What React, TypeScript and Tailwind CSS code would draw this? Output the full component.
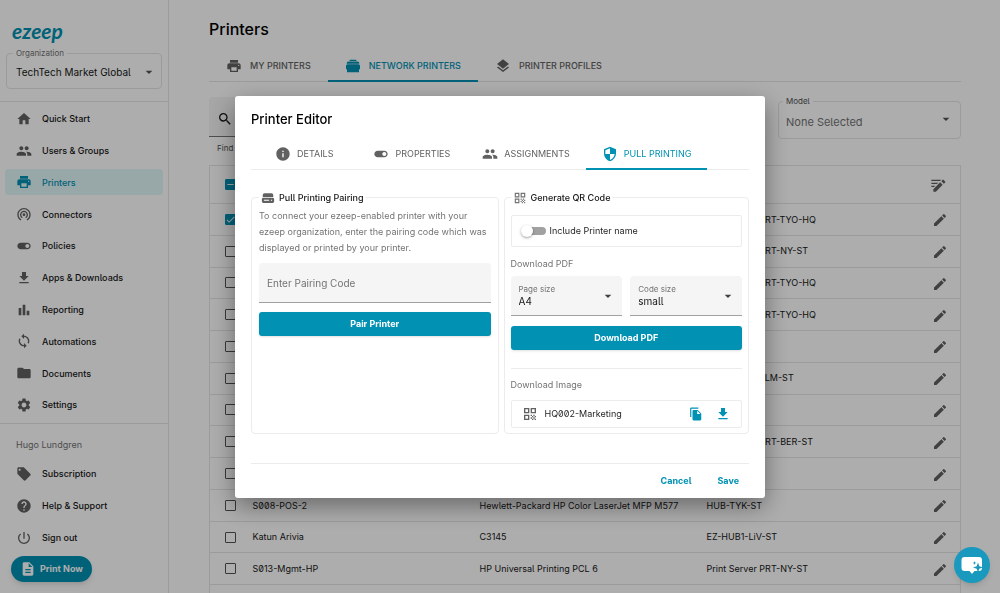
import type { ReactNode } from "react";
import type { IconType } from "react-icons";
import {
  MdArrowDropDown,
  MdBarChart,
  MdCheck,
  MdDescription,
  MdEdit,
  MdFileCopy,
  MdFolder,
  MdGetApp,
  MdHelp,
  MdHome,
  MdInfo,
  MdLayers,
  MdLocalOffer,
  MdPeople,
  MdPowerSettingsNew,
  MdPrint,
  MdQrCode,
  MdRemove,
  MdSearch,
  MdSecurity,
  MdSettings,
  MdSync,
  MdToggleOn,
  MdWifiTethering,
} from "react-icons/md";

interface NavEntry {
  label: string;
  icon: IconType;
  active?: boolean;
}

interface Printer {
  name: string;
  model: string;
  server: string;
  selected?: boolean;
}

const mainNav: NavEntry[] = [
  { label: "Quick Start", icon: MdHome },
  { label: "Users & Groups", icon: MdPeople },
  { label: "Printers", icon: MdPrint, active: true },
  { label: "Connectors", icon: MdWifiTethering },
  { label: "Policies", icon: MdToggleOn },
  { label: "Apps & Downloads", icon: MdGetApp },
  { label: "Reporting", icon: MdBarChart },
  { label: "Automations", icon: MdSync },
  { label: "Documents", icon: MdFolder },
  { label: "Settings", icon: MdSettings },
];

const userNav: NavEntry[] = [
  { label: "Subscription", icon: MdLocalOffer },
  { label: "Help & Support", icon: MdHelp },
  { label: "Sign out", icon: MdPowerSettingsNew },
];

const printers: Printer[] = [
  { name: "", model: "", server: "Print Server PRT-TYO-HQ", selected: true },
  { name: "", model: "", server: "Print Server PRT-NY-ST" },
  { name: "", model: "", server: "Print Server PRT-TYO-HQ" },
  { name: "", model: "", server: "Print Server PRT-TYO-HQ" },
  { name: "", model: "", server: "" },
  { name: "", model: "", server: "Print Server ELM-ST" },
  { name: "", model: "", server: "" },
  { name: "", model: "", server: "Print Server PRT-BER-ST" },
  { name: "", model: "", server: "" },
  { name: "S008-POS-2", model: "Hewlett-Packard HP Color LaserJet MFP M577", server: "HUB-TYK-ST" },
  { name: "Katun Arivia", model: "C3145", server: "EZ-HUB1-LiV-ST" },
  { name: "S013-Mgmt-HP", model: "HP Universal Printing PCL 6", server: "Print Server PRT-NY-ST" },
  { name: "", model: "", server: "" },
];

function NetworkPrinterIcon({ className }: { className?: string }) {
  return (
    <svg viewBox="0 0 24 24" fill="currentColor" className={className} aria-hidden="true">
      <path d="M7 2.500h10v2H7zM5.500 5.200h13a3 3 0 0 1 3 3.300h-19a3 3 0 0 1 3-3.300z" />
      <path d="M4 9.200h16a2.500 2.500 0 0 1 2.500 2.500V17H21v4.500H3V17H1.500v-5.300A2.500 2.500 0 0 1 4 9.200z" />
    </svg>
  );
}

function PairingIcon({ className }: { className?: string }) {
  return (
    <svg viewBox="0 0 24 24" fill="currentColor" className={className} aria-hidden="true">
      <path d="M6 4h12a3 3 0 0 1 3 3v3.500H3V7a3 3 0 0 1 3-3z" />
      <path
        fillRule="evenodd"
        d="M3 12h18a1.500 1.500 0 0 1 1.500 1.500V18a2.500 2.500 0 0 1-2.500 2.500H4A2.500 2.500 0 0 1 1.500 18v-4.500A1.500 1.500 0 0 1 3 12zM5 15.200v1.600h9v-1.600zm12 0v1.600h2v-1.600z"
      />
    </svg>
  );
}

function BulkEditIcon({ className }: { className?: string }) {
  return (
    <svg viewBox="0 0 24 24" fill="currentColor" className={className} aria-hidden="true">
      <path d="M2 4h15l-2 2H2zM2 8.500h10.500l-2 2H2zM2 13h6l-2 2H2z" />
      <path d="M5 18.200V22h3.800L19 11.800 15.200 8zM22.700 8.100a1 1 0 0 0 0-1.400l-2.400-2.400a1 1 0 0 0-1.400 0L17 6.200 20.800 10z" />
    </svg>
  );
}

function ChatIcon() {
  return (
    <svg viewBox="0 0 24 24" className="size-6" aria-hidden="true">
      <path
        fill="white"
        d="M4.500 4h14.500a3 3 0 0 1 3 3v8a3 3 0 0 1-3 3h-4.500L12 21l-2.500-3h-5a3 3 0 0 1-3-3V7a3 3 0 0 1 3-3z"
      />
      <path
        fill="#1899bd"
        d="M18 9.500l1.300 3.700L23 14.500l-3.700 1.300L18 19.500l-1.300-3.700-3.700-1.300 3.700-1.300zM14.500 8l.5 1.500 1.500.5-1.500.5-.5 1.500-.5-1.500-1.500-.5 1.500-.5z"
      />
    </svg>
  );
}

function NavItem({ label, icon: Icon, active }: NavEntry) {
  return (
    <li className="flex items-center">
      <a
        href="#"
        className={`flex h-[26px] w-full items-center gap-[10px] rounded-sm px-[11px] text-[9px] font-medium ${
          active ? "bg-[#e0f6f8] text-[#0091b3]" : "text-neutral-900"
        }`}
      >
        <Icon className={`size-4 ${active ? "" : "text-[#616161]"}`} />
        {label}
      </a>
    </li>
  );
}

function Sidebar() {
  return (
    <aside className="flex w-[169px] shrink-0 flex-col border-r border-neutral-200">
      <div className="border-b border-neutral-200 px-[6px] pt-[14px] pb-3">
        <a href="#" className="block px-[6px] font-['Lato'] text-[21px] leading-[33px] font-bold text-[#0091b3] italic">
          ezeep
        </a>
        <fieldset className="rounded-sm border border-neutral-200 pb-[3px]">
          <legend className="ml-[6px] px-[3px] text-[8px] leading-[12px] text-neutral-500">
            <label htmlFor="organization">Organization</label>
          </legend>
          <div className="relative">
            <select
              id="organization"
              className="block w-full appearance-none px-[9px] text-[10px] leading-[26px] text-neutral-900"
            >
              <option>TechTech Market Global</option>
            </select>
            <MdArrowDropDown className="pointer-events-none absolute top-[5px] right-1 size-4 text-neutral-600" />
          </div>
        </fieldset>
      </div>
      <nav>
        <ul className="grid h-[322px] auto-rows-fr border-b border-neutral-200 px-[5px] pt-px pb-[2px]">
          {mainNav.map((entry) => (
            <NavItem key={entry.label} {...entry} />
          ))}
        </ul>
        <h2 className="px-4 pt-[13px] pb-[5px] text-[9px] leading-4 text-neutral-500">Hugo Lundgren</h2>
        <ul className="grid h-[96px] auto-rows-fr px-[5px]">
          {userNav.map((entry) => (
            <NavItem key={entry.label} {...entry} />
          ))}
        </ul>
      </nav>
      <button className="mt-[2px] ml-[11px] flex h-[26px] w-fit shrink-0 items-center gap-1 rounded-full bg-[#0091b3] px-[9px] text-[9px] font-bold text-white shadow-md">
        <MdDescription className="size-4" />
        Print Now
      </button>
    </aside>
  );
}

function PageTab({ icon, label, active }: { icon: ReactNode; label: string; active?: boolean }) {
  return (
    <button
      role="tab"
      aria-selected={!!active}
      className={`-mb-px flex h-8 items-center gap-2 border-b-2 px-[17px] pt-[2px] text-[9px] font-medium ${
        active ? "border-[#0091b3] text-[#0091b3]" : "border-transparent text-[#616161]"
      }`}
    >
      {icon}
      {label}
    </button>
  );
}

function RowCheckbox({ label, checked, mixed }: { label: string; checked?: boolean; mixed?: boolean }) {
  const filled = checked || mixed;
  return (
    <span className="relative ml-[15px] block size-[11px]">
      <input
        type="checkbox"
        aria-label={label}
        defaultChecked={filled}
        className="block size-[11px] appearance-none rounded-[1px] border border-neutral-600 checked:border-[#0091b3] checked:bg-[#0091b3]"
      />
      {checked && <MdCheck className="pointer-events-none absolute inset-0 size-[11px] text-white" />}
      {mixed && <MdRemove className="pointer-events-none absolute inset-0 size-[11px] text-white" />}
    </span>
  );
}

function PrinterTable() {
  return (
    <table className="mt-[10px] h-[452px] w-full table-fixed border border-neutral-200 text-left text-[9px] text-neutral-900">
      <colgroup>
        <col className="w-[43px]" />
        <col className="w-[227px]" />
        <col className="w-[227px]" />
        <col />
        <col className="w-[31px]" />
      </colgroup>
      <thead>
        <tr className="h-[38px] border-b border-neutral-200">
          <th>
            <RowCheckbox label="Select all printers" mixed />
          </th>
          <th />
          <th />
          <th />
          <th>
            <button aria-label="Edit selected printers" className="block">
              <BulkEditIcon className="size-4 text-[#616161]" />
            </button>
          </th>
        </tr>
      </thead>
      <tbody>
        {printers.map((printer, i) => (
          <tr key={i} className="border-b border-neutral-200">
            <td>
              <RowCheckbox label={`Select printer ${i + 1}`} checked={printer.selected} />
            </td>
            <td className="whitespace-nowrap">{printer.name}</td>
            <td className="whitespace-nowrap">{printer.model}</td>
            <td className="whitespace-nowrap">{printer.server}</td>
            <td>
              <button aria-label={`Edit printer ${i + 1}`} className="block pt-[2px] pl-[2px]">
                <MdEdit className="size-4 text-[#616161]" />
              </button>
            </td>
          </tr>
        ))}
      </tbody>
    </table>
  );
}

function PrintersPage() {
  return (
    <main className="min-w-0 flex-1 pr-[39px] pl-10">
      <h1 className="pt-[17px] text-[16px] leading-6 font-medium text-black">Printers</h1>
      <div role="tablist" className="mt-[9px] flex border-b border-neutral-200">
        <PageTab icon={<MdPrint className="size-4" />} label="MY PRINTERS" />
        <PageTab icon={<NetworkPrinterIcon className="size-4" />} label="NETWORK PRINTERS" active />
        <PageTab icon={<MdLayers className="size-4" />} label="PRINTER PROFILES" />
      </div>
      <div className="mt-[15px] flex justify-between">
        <div className="w-[270px]">
          <div className="flex h-10 items-center rounded-t-sm border-b border-neutral-500 bg-neutral-100 px-2 pt-1">
            <MdSearch className="size-4 text-neutral-900" />
            <input id="search" aria-label="Search" className="min-w-0 flex-1" />
          </div>
          <p className="px-2 pt-1 text-[8px] leading-[14px] text-neutral-600">Find</p>
        </div>
        <fieldset className="h-[42px] w-[183px] rounded-sm border border-neutral-200">
          <legend className="ml-1 px-[3px] text-[8px] leading-[8px] text-neutral-600">
            <label htmlFor="model">Model</label>
          </legend>
          <div className="relative">
            <select
              id="model"
              className="block w-full appearance-none px-[7px] text-[11px] leading-[35px] text-neutral-500"
            >
              <option>None Selected</option>
            </select>
            <MdArrowDropDown className="pointer-events-none absolute top-[6px] right-[6px] size-4 text-neutral-600" />
          </div>
        </fieldset>
      </div>
      <PrinterTable />
    </main>
  );
}

function DialogTab({ icon: Icon, label, active, wide }: NavEntry & { wide?: boolean }) {
  return (
    <button
      role="tab"
      aria-selected={!!active}
      className={`-mb-px flex h-8 items-center gap-[6px] border-b-2 pt-[2px] text-[9px] ${wide ? "px-6" : "px-4"} ${
        active ? "border-[#0091b3] text-[#0091b3]" : "border-transparent text-[#616161]"
      }`}
    >
      <Icon className="size-4" />
      {label}
    </button>
  );
}

function FilledSelect({ id, label, value }: { id: string; label: string; value: string }) {
  return (
    <div className="relative flex-1">
      <label htmlFor={id} className="pointer-events-none absolute top-[7px] left-2 text-[8px] leading-3 text-neutral-500">
        {label}
      </label>
      <select
        id={id}
        className="block h-10 w-full appearance-none rounded-t-sm border-b border-neutral-400 bg-neutral-100 px-2 pt-[12px] text-[10px] text-neutral-900"
      >
        <option>{value}</option>
      </select>
      <MdArrowDropDown className="pointer-events-none absolute top-3 right-[6px] size-4 text-neutral-700" />
    </div>
  );
}

function PrimaryButton({ children }: { children: ReactNode }) {
  return (
    <button className="block h-6 w-full rounded-[3px] bg-[#0091b3] text-[9px] font-bold text-white shadow-sm">
      {children}
    </button>
  );
}

function PairingPanel() {
  return (
    <fieldset className="min-w-0 flex-1 rounded-sm border border-[#ececec] px-[7px]">
      <legend className="flex items-center gap-1 px-[2px] text-[9px] leading-4 font-medium text-neutral-900">
        <PairingIcon className="size-[14px] text-[#616161]" />
        Pull Printing Pairing
      </legend>
      <p className="pt-[2px] text-[9px] leading-4 text-neutral-500">
        To connect your ezeep-enabled printer with your ezeep organization, enter the pairing code which was displayed
        or printed by your printer.
      </p>
      <input
        aria-label="Pairing code"
        placeholder="Enter Pairing Code"
        className="mt-[7px] block h-10 w-full rounded-t-sm border-b border-neutral-400 bg-neutral-100 px-2 pt-[2px] text-[10px] placeholder:text-neutral-500"
      />
      <div className="pt-[9px]">
        <PrimaryButton>Pair Printer</PrimaryButton>
      </div>
    </fieldset>
  );
}

function QrPanel() {
  return (
    <fieldset className="min-w-0 flex-1 rounded-sm border border-[#ececec] px-[6px] pb-[5px]">
      <legend className="flex items-center gap-1 px-[2px] text-[9px] leading-4 font-medium text-neutral-900">
        <MdQrCode className="size-[14px] text-neutral-500" />
        Generate QR Code
      </legend>
      <label className="mt-[9px] flex h-8 items-center gap-1 rounded-[2px] border border-[#ececec] px-[9px] text-[9px] text-neutral-800">
        <span className="relative h-3 w-[25px]">
          <input
            type="checkbox"
            role="switch"
            className="absolute top-[2px] right-0 h-2 w-[20px] appearance-none rounded-full bg-neutral-400"
          />
          <span className="absolute top-0 left-0 size-3 rounded-full bg-white shadow-sm shadow-black/30" />
        </span>
        Include Printer name
      </label>
      <h3 className="pt-[9px] text-[9px] leading-4 text-neutral-500">Download PDF</h3>
      <div className="mt-1 flex gap-2">
        <FilledSelect id="page-size" label="Page size" value="A4" />
        <FilledSelect id="code-size" label="Code size" value="small" />
      </div>
      <div className="pt-[10px]">
        <PrimaryButton>Download PDF</PrimaryButton>
      </div>
      <hr className="mt-[18px] border-[#ececec]" />
      <h3 className="pt-2 text-[9px] leading-4 text-neutral-500">Download Image</h3>
      <div className="mt-[7px] flex h-[28px] items-center rounded-[2px] border border-[#ececec] px-[10px] text-neutral-800">
        <MdQrCode className="size-4 text-[#616161]" />
        <span className="flex-1 pl-[7px] text-[9px]">HQ002-Marketing</span>
        <button aria-label="Copy image" className="text-[#0091b3]">
          <MdFileCopy className="size-[14px]" />
        </button>
        <button aria-label="Download image" className="ml-3 text-[#0091b3]">
          <MdGetApp className="size-4" />
        </button>
      </div>
    </fieldset>
  );
}

function PrinterEditor() {
  return (
    <div
      role="dialog"
      aria-modal="true"
      aria-labelledby="editor-title"
      className="w-full max-w-[530px] rounded-[3px] bg-white px-4 pt-[11px] pb-[5px] shadow-[0_8px_24px_rgba(0,0,0,0.4)]"
    >
      <h2 id="editor-title" className="text-[13px] leading-6 font-medium text-black">
        Printer Editor
      </h2>
      <div role="tablist" className="mt-[7px] flex border-b border-[#ececec]">
        <DialogTab icon={MdInfo} label="DETAILS" wide />
        <DialogTab icon={MdToggleOn} label="PROPERTIES" />
        <DialogTab icon={MdPeople} label="ASSIGNMENTS" />
        <DialogTab icon={MdSecurity} label="PULL PRINTING" active />
      </div>
      <div className="mt-5 flex gap-[5px]">
        <PairingPanel />
        <QrPanel />
      </div>
      <div className="mt-[29px] flex justify-end gap-[6px] border-t border-[#ececec] pt-[5px] text-[9px] font-bold text-[#0091b3]">
        <button className="h-6 px-[10px]">Cancel</button>
        <button className="h-6 px-[10px]">Save</button>
      </div>
    </div>
  );
}

export default function App() {
  return (
    <div className="h-screen overflow-hidden bg-white font-['Inter',sans-serif] [font-feature-settings:'cv05','zero']">
      <div className="flex h-full">
        <Sidebar />
        <PrintersPage />
      </div>
      <div className="fixed inset-0 flex items-center justify-center bg-black/32">
        <PrinterEditor />
      </div>
      <button
        aria-label="Open chat"
        className="fixed right-[10px] bottom-[10px] flex size-9 items-center justify-center rounded-full bg-[#1899bd] shadow-md"
      >
        <ChatIcon />
      </button>
    </div>
  );
}
